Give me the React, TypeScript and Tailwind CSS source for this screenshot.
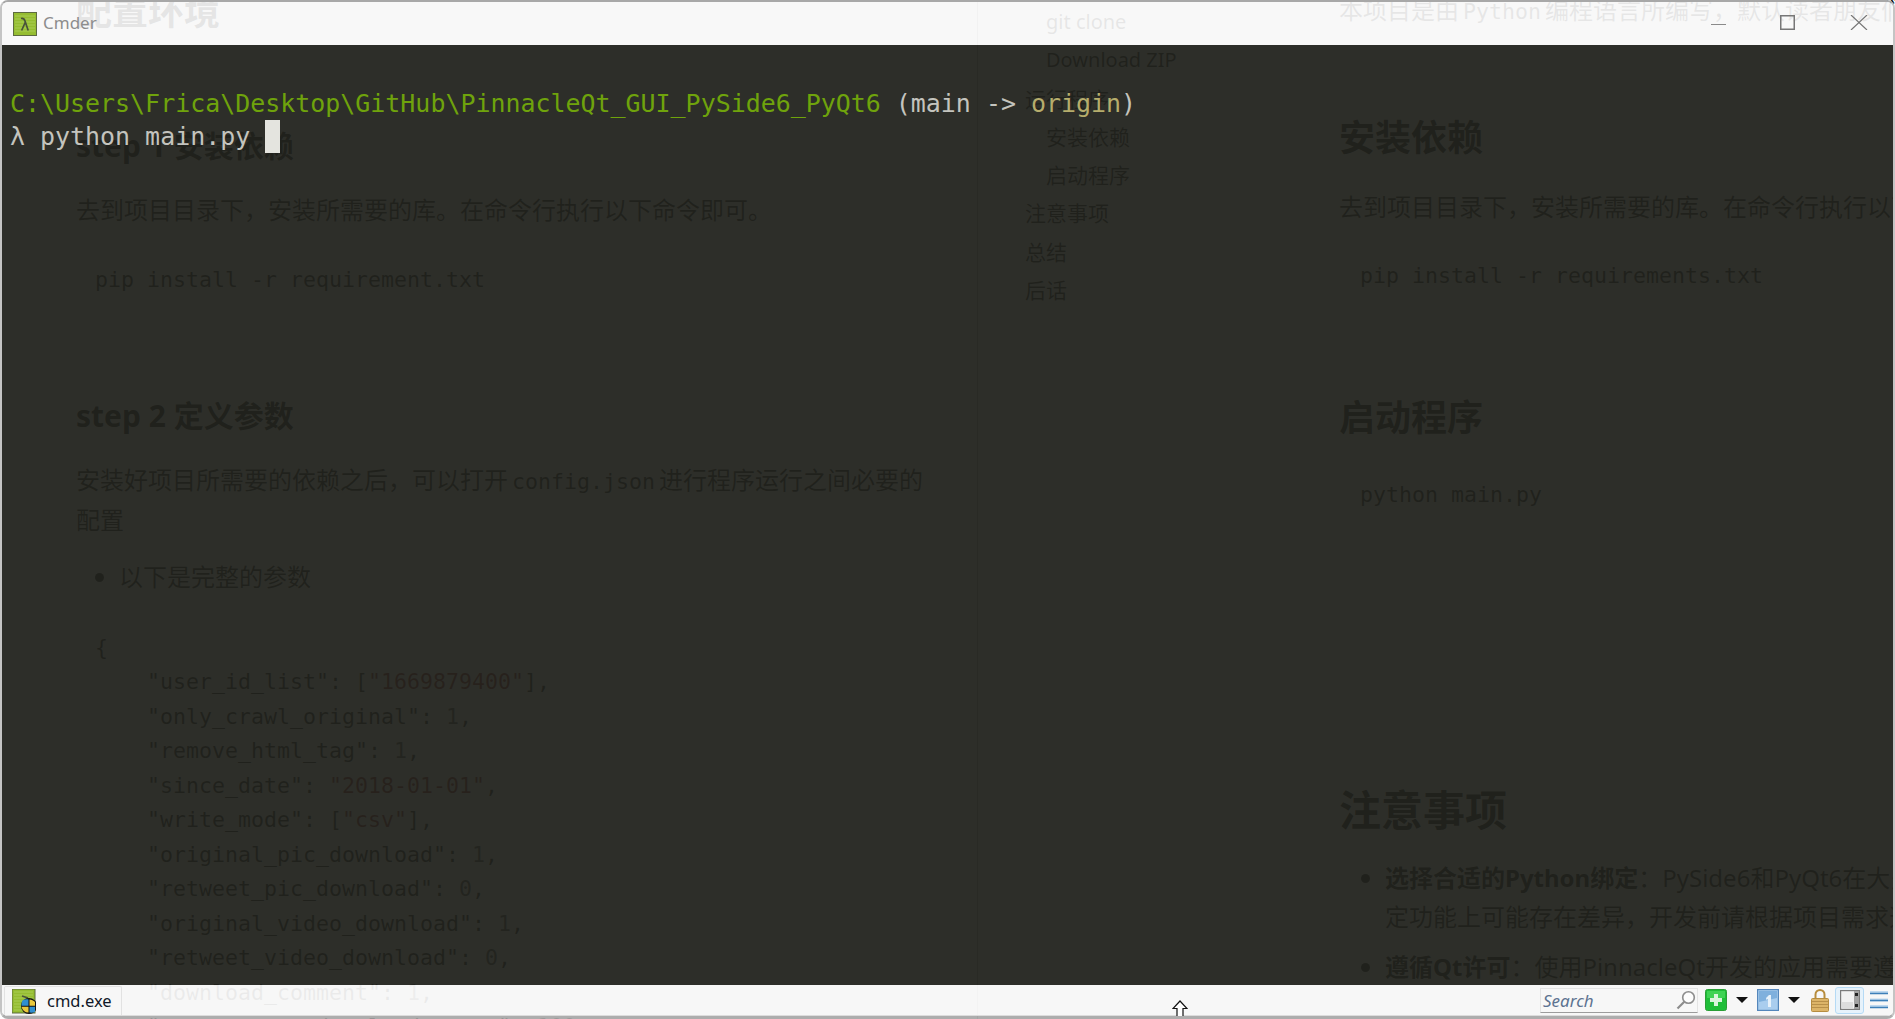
import React from "react";

const body = "[font-family:'Noto_Sans','Noto_Sans_CJK_SC',sans-serif]";
const mono = "[font-family:'DejaVu_Sans_Mono','Noto_Sans_CJK_SC',monospace]";

const S = ({ children }: { children: React.ReactNode }) => <span className="text-[#8a1010]">{children}</span>;
const N = ({ children }: { children: React.ReactNode }) => <span className="text-[#444]">{children}</span>;

function JsonBlock() {
  const rows: [string, React.ReactNode][] = [
    ["user_id_list", <>[<S>"1669879400"</S>],</>],
    ["only_crawl_original", <><N>1</N>,</>],
    ["remove_html_tag", <><N>1</N>,</>],
    ["since_date", <><S>"2018-01-01"</S>,</>],
    ["write_mode", <>[<S>"csv"</S>],</>],
    ["original_pic_download", <><N>1</N>,</>],
    ["retweet_pic_download", <><N>0</N>,</>],
    ["original_video_download", <><N>1</N>,</>],
    ["retweet_video_download", <><N>0</N>,</>],
    ["download_comment", <><N>1</N>,</>],
    ["comment_max_download_count", <><N>100</N>,</>],
  ];
  return (
    <div className={`${mono} ml-[19px] mt-[34px] text-[21.6px] leading-[34.5px] whitespace-pre text-[#111]`}>
      <div>{"{"}</div>
      {rows.map(([k, v]) => (
        <div key={k} className="pl-[52px]">
          {`"${k}": `}
          {v}
        </div>
      ))}
    </div>
  );
}

function Page() {
  return (
    <div className={`${body} flex h-full bg-white text-[24px] leading-[40px] text-[#111]`}>
      <div className="w-[977px] shrink-0 pl-[76px] pr-[100px]">
        <h2 className="-mt-[12px] text-[36px] leading-[48px] font-bold text-black">配置环境</h2>
        <h3 className="mt-[90px] text-[30px] leading-[40px] font-bold text-black">step 1 安装依赖</h3>
        <p className="mt-[24px] whitespace-nowrap">去到项目目录下，安装所需要的库。在命令行执行以下命令即可。</p>
        <div className={`${mono} ml-[19px] mt-[33px] text-[21.6px] leading-[34.5px]`}>pip install -r requirement.txt</div>
        <h3 className="mt-[98px] text-[30px] leading-[40px] font-bold text-black">step 2 定义参数</h3>
        <p className="mt-[24px] w-[860px]">
          安装好项目所需要的依赖之后，可以打开<span className={`${mono} mx-[4px] text-[21.6px] leading-none`}>config.json</span>进行程序运行之间必要的配置
        </p>
        <ul className="mt-[17px] list-disc pl-[43px]">
          <li>以下是完整的参数</li>
        </ul>
        <JsonBlock />
      </div>

      <nav className="w-[362px] shrink-0 border-l border-[#aaa] pl-[47px] pt-[3px] text-[21px] leading-[38.3px]">
        <div className="pl-[21px] text-[20px]">git clone</div>
        <div className="pl-[21px] text-[20px]">Download ZIP</div>
        <div>运行程序</div>
        <div className="pl-[21px]">安装依赖</div>
        <div className="pl-[21px]">启动程序</div>
        <div>注意事项</div>
        <div>总结</div>
        <div>后话</div>
      </nav>

      <div className="min-w-0 flex-1 overflow-hidden whitespace-nowrap">
        <p className="-mt-[10px]">
          本项目是由<span className={`${mono} mx-[4px] text-[21.6px] leading-none`}>Python</span>编程语言所编写，默认读者朋友们已经配置好了环境
        </p>
        <h2 className="mt-[84px] text-[36px] leading-[48px] font-bold text-black">安装依赖</h2>
        <p className="mt-[25px]">去到项目目录下，安装所需要的库。在命令行执行以下命令即可。</p>
        <div className={`${mono} ml-[21px] mt-[32px] text-[21.6px] leading-[34.5px]`}>pip install -r requirements.txt</div>
        <h2 className="mt-[100px] text-[36px] leading-[48px] font-bold text-black">启动程序</h2>
        <div className={`${mono} ml-[21px] mt-[36px] text-[21.6px] leading-[34.5px]`}>python main.py</div>
        <h2 className="mt-[270px] text-[42px] leading-[56px] font-bold text-black">注意事项</h2>
        <ul className="mt-[21px] list-disc pl-[46px] leading-[38.5px]">
          <li>
            <b className="text-black">选择合适的Python绑定</b>：PySide6和PyQt6在大多数情况下是兼容的，但在特
            <br />
            定功能上可能存在差异，开发前请根据项目需求选择合适的绑定。
          </li>
          <li className="mt-[12px]">
            <b className="text-black">遵循Qt许可</b>：使用PinnacleQt开发的应用需要遵循Qt的开源许可协议。
          </li>
        </ul>
      </div>
    </div>
  );
}

function CmderIcon() {
  return (
    <svg width="24" height="24" viewBox="0 0 24 24" className="shrink-0">
      <rect x="0.5" y="0.5" width="23" height="23" fill="#95bd31" stroke="#5d6b40" />
      <path d="M2 4h20M2 7h20M2 10h20M2 13h20M2 16h20M2 19h20" stroke="#a9cd55" strokeWidth="1" />
      <path d="M8 6.5c2.5-.6 3.4.6 4 2.5l3.2 9.5M12.2 10.5 8.6 18.5" fill="none" stroke="#48523a" strokeWidth="1.7" />
    </svg>
  );
}

function CmdIcon() {
  return (
    <svg width="24" height="25" viewBox="0 0 24 25" className="shrink-0">
      <rect x="0" y="0" width="23" height="24" fill="#95bd31" stroke="#5d6b40" />
      <path d="M2 3h19M2 6h19M2 9h19M2 12h19M2 15h19M2 18h19M2 21h19" stroke="#a9cd55" />
      <path d="M10 7 16 9" stroke="#48523a" strokeWidth="1.5" />
      <circle cx="17" cy="17" r="8" fill="#111" />
      <path d="M10.5 11.5c2-1.5 4-1.6 6-1v6.2h-7c0-2 .3-3.8 1-5.2z" fill="#2f8fd0" />
      <path d="M17.5 10.6c2 .2 4 1 5.5 2.4v3.7h-5.5z" fill="#e9c83c" />
      <path d="M9.5 17.7h7v5.8c-3.2.2-6-1.8-7-5.8z" fill="#e9c83c" />
      <path d="M17.5 17.7H23v5.4c-1.7.6-3.5.7-5.5.5z" fill="#2f8fd0" />
    </svg>
  );
}

function MagnifierIcon() {
  return (
    <svg width="20" height="20" viewBox="0 0 20 20" className="shrink-0">
      <circle cx="12.5" cy="7.5" r="5.8" fill="#fdfdfd" stroke="#8d8d8d" strokeWidth="1.6" />
      <path d="M8.3 11.8 1.5 18.5" stroke="#8d8d8d" strokeWidth="2.2" />
    </svg>
  );
}

function PlusIcon() {
  return (
    <svg width="22" height="22" viewBox="0 0 22 22" className="shrink-0">
      <rect x="0.5" y="0.5" width="21" height="21" rx="2" fill="#1fbe38" stroke="#2a9e36" />
      <rect x="2" y="2" width="18" height="7" fill="#3fd354" />
      <path d="M9 5h4v4h4v4h-4v4H9v-4H5V9h4z" fill="#d9f5dc" />
    </svg>
  );
}

function DownArrow() {
  return (
    <svg width="12" height="6" viewBox="0 0 12 6" className="shrink-0">
      <path d="M0 0h12L6 6z" fill="#111" />
    </svg>
  );
}

function OneIcon() {
  return (
    <svg width="22" height="22" viewBox="0 0 22 22" className="shrink-0">
      <rect x="0.5" y="0.5" width="21" height="21" fill="#a9cdee" stroke="#5486bb" strokeWidth="1.4" />
      <path d="M2 2h18v7L2 13z" fill="#7fb0dd" />
      <path d="M9 9l3-3h2v12h-3V10l-1.5 1z" fill="#e6f1fa" />
    </svg>
  );
}

function LockIcon() {
  return (
    <svg width="18" height="23" viewBox="0 0 18 23" className="shrink-0">
      <path d="M4.5 10V5.5a4.5 4.5 0 0 1 9 0V10" fill="none" stroke="#b78c3c" strokeWidth="2" />
      <rect x="0.5" y="9.5" width="17" height="13" rx="1" fill="#dcb468" stroke="#b68c40" />
      <path d="M1 12.5h16M1 15.5h16M1 18.5h16" stroke="#b8904a" />
    </svg>
  );
}

function SplitIcon() {
  return (
    <div className="flex h-[27px] w-[29px] shrink-0 items-center justify-center rounded-[3px] border border-[#b5daf5] bg-[#e6f2fb]">
      <svg width="20" height="20" viewBox="0 0 20 20">
        <rect x="0.5" y="0.5" width="19" height="19" fill="#f2f2f2" stroke="#7c7c7c" strokeWidth="1.4" />
        <rect x="14" y="1" width="5" height="18" fill="#a2a2a2" />
        <rect x="2" y="12" width="11" height="6" fill="#dddddd" />
        <rect x="15" y="3" width="3" height="3" fill="#222" />
        <rect x="15" y="14" width="3" height="3" fill="#222" />
      </svg>
    </div>
  );
}

function MenuIcon() {
  return (
    <svg width="18" height="18" viewBox="0 0 18 18" className="shrink-0">
      <path d="M0 1.5h18M0 15.5h18M0 9h18" stroke="#bfd9ef" strokeWidth="3" />
      <path d="M0 2.5h18M0 9.5h18M0 16.5h18" stroke="#3d7fb8" strokeWidth="1.6" />
    </svg>
  );
}

function Window() {
  return (
    <div className="absolute inset-0 flex flex-col overflow-hidden rounded-[8px] border-x-2 border-t-2 border-b-[3px] border-x-[#c4c4c4] border-t-[#a8a8a8] border-b-[#a4a4a4]/90">
      <header className="flex h-[43px] shrink-0 items-center bg-[#f7f7f7]/[0.925] pl-[11px] pt-[1px]">
        <CmderIcon />
        <span className={`${body} ml-[6px] pb-[2px] text-[17px] text-[#8d8d8d]`}>Cmder</span>
        <div className="ml-auto flex items-center pb-[3px] pr-[25px]">
          <svg width="15" height="15" viewBox="0 0 15 15" className="mr-[54px]">
            <path d="M0 9.5h15" stroke="#8a8a8a" />
          </svg>
          <svg width="15" height="15" viewBox="0 0 15 15" className="mr-[55px]">
            <rect x="0.75" y="0.75" width="13.5" height="13.5" fill="none" stroke="#777" strokeWidth="1.5" />
          </svg>
          <svg width="18" height="15" viewBox="0 0 18 15">
            <path d="M1 0 17 15M17 0 1 15" stroke="#777" strokeWidth="1.2" />
          </svg>
        </div>
      </header>

      <main className={`${mono} min-h-0 flex-1 bg-[#22231e]/95 pl-[8px] pt-[42px] text-[24.95px] leading-[33px] whitespace-pre`}>
        <div>
          <span className="text-[#6fa30c]">{"C:\\Users\\Frica\\Desktop\\GitHub\\PinnacleQt_GUI_PySide6_PyQt6"}</span>
          <span className="text-[#c4c4be]"> (main -&gt; </span>
          <span className="text-[#b6ad6c]">origin</span>
          <span className="text-[#c4c4be]">)</span>
        </div>
        <div className="flex items-center text-[#c4c4be]">
          <span>λ python main.py </span>
          <span className="h-[33px] w-[15px] bg-[#e4e4df]" />
        </div>
      </main>

      <footer className="flex h-[31px] shrink-0 items-end border-b border-[#dcdcdc] bg-[#f7f7f7]/95 pl-[2px] pr-[5px]">
        <div className="flex h-[29px] w-[118px] items-center rounded-t-[2px] border border-b-0 border-[#e2e2e2] pl-[7px]">
          <CmdIcon />
          <span className={`${body} ml-[11px] text-[16.5px] leading-none text-[#101828]`}>cmd.exe</span>
        </div>
        <div className="ml-auto flex h-full items-center">
          <div className="flex h-[25px] w-[158px] items-center justify-between border border-[#e4e4e4] border-b-[#9c9c9c] pl-[2px] pr-[1px]">
            <span className={`${body} text-[17px] leading-none text-[#5d7391] italic`}>Search</span>
            <MagnifierIcon />
          </div>
          <div className="ml-[7px] flex items-center">
            <PlusIcon />
            <span className="ml-[9px]"><DownArrow /></span>
            <span className="ml-[9px]"><OneIcon /></span>
            <span className="ml-[9px]"><DownArrow /></span>
            <span className="ml-[11px]"><LockIcon /></span>
            <span className="ml-[6px]"><SplitIcon /></span>
            <span className="ml-[6px]"><MenuIcon /></span>
          </div>
        </div>
      </footer>

      <svg width="16" height="20" viewBox="0 0 16 20" className="absolute left-[1170px] top-[998px]">
        <path d="M8 1 15 8.5h-4V20H5V8.5H1z" fill="#fff" stroke="#111" strokeWidth="1.2" />
      </svg>
    </div>
  );
}

export default function App() {
  return (
    <div className="relative h-[1019px] w-[1895px] overflow-hidden">
      <Page />
      <Window />
    </div>
  );
}
